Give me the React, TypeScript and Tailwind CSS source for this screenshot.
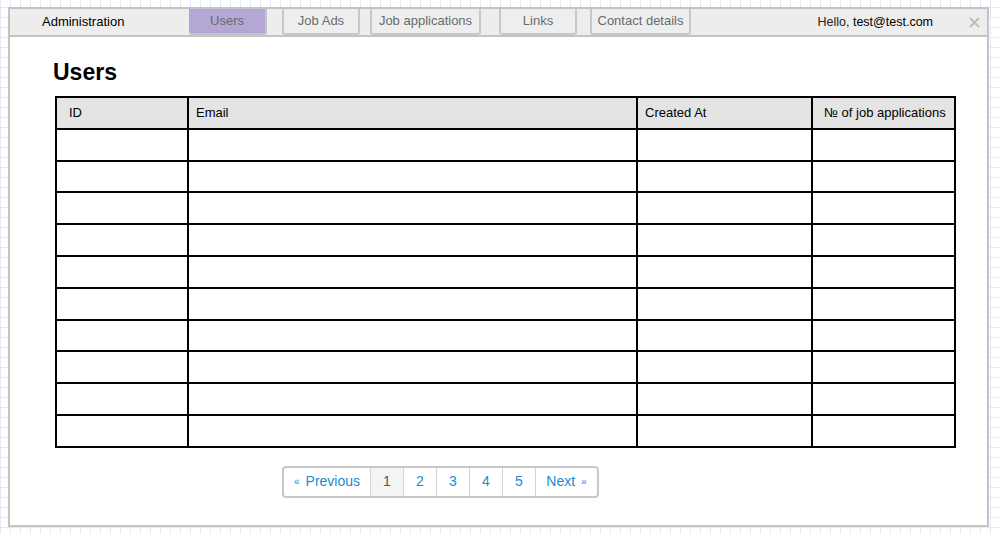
import React from "react"

const tabs = [
  { label: "Users", w: "w-[78px]", ml: "ml-0", active: true },
  { label: "Job Ads", w: "w-[78px]", ml: "ml-[15px]" },
  { label: "Job applications", w: "w-[111px]", ml: "ml-[10px]" },
  { label: "Links", w: "w-[78px]", ml: "ml-[18px]" },
  { label: "Contact details", w: "w-[101px]", ml: "ml-[13px]" },
]

const columns = [
  { label: "ID", w: "w-[132px]", pad: "pl-[12px]" },
  { label: "Email", w: "w-[449px]", pad: "pl-[7px]" },
  { label: "Created At", w: "w-[175px]", pad: "pl-[7px]" },
  { label: "№ of job applications", w: "w-[143px]", pad: "pl-[11px]" },
]

const rows = Array.from({ length: 10 }, (_, i) => i)

const pages = ["1", "2", "3", "4", "5"]

export default function App() {
  return (
    <div className="h-[534px] w-full overflow-hidden bg-white bg-[linear-gradient(#e7e7f7_1px,transparent_1px),linear-gradient(90deg,#e7e7f7_1px,transparent_1px)] bg-[size:10px_10px] bg-[position:0_7px] pt-[7px] pl-[8px] font-['Liberation_Sans',Arial,sans-serif]">
      <div className="w-[981px] h-[520px] border-2 border-[#c4c4c4] bg-white">
        {/* top bar */}
        <div className="h-[28px] flex items-start bg-[#ededed] border-b-2 border-[#c4c4c4]">
          <div className="w-[179px] h-[26px] flex items-center pl-[32px] text-[13px] text-black">
            Administration
          </div>
          {tabs.map((t) => (
            <div
              key={t.label}
              className={`${t.w} ${t.ml} h-[26px] flex items-center justify-center text-[13px] text-[#6a6a6a] rounded-b-[3px] border-2 border-t-0 ${
                t.active ? "bg-[#b4a7d6] border-[#c4c4c4] border-l-0" : "bg-[#eeeeee] border-[#c8c8c8]"
              }`}
            >
              {t.label}
            </div>
          ))}
          <div className="ml-auto h-[26px] flex items-center text-[12.5px] text-[#222]">
            Hello,&nbsp;<span className="text-black">test@test.com</span>
          </div>
          <div className="w-[54px] h-[26px] flex items-center justify-center pl-[28px]">
            <svg width="11" height="11" viewBox="0 0 11 11">
              <path d="M1 1L10 10M10 1L1 10" stroke="#bdbdbd" strokeWidth="2" />
            </svg>
          </div>
        </div>

        <h1 className="mt-[22px] ml-[43px] text-[23px] leading-[26px] font-bold text-black">Users</h1>

        <table className="mt-[11px] ml-[45px] w-[899px] table-fixed border-collapse border-2 border-black text-[13px]">
          <thead>
            <tr className="h-[31.8px] bg-[#e4e4e4]">
              {columns.map((c) => (
                <th key={c.label} className={`${c.w} ${c.pad} border-2 border-black text-left font-normal text-black`}>
                  {c.label}
                </th>
              ))}
            </tr>
          </thead>
          <tbody>
            {rows.map((r) => (
              <tr key={r} className="h-[31.8px]">
                {columns.map((c) => (
                  <td key={c.label} className="border-2 border-black" />
                ))}
              </tr>
            ))}
          </tbody>
        </table>

        <div className="mt-[18px] ml-[272px] flex w-fit h-[32px] border-2 border-[#c8c8c8] rounded-[4px] text-[14px] overflow-hidden">
          <div className="w-[87px] flex items-center justify-center text-[#1a8bd1] border-r border-[#d4d4d4]">
            <span className="text-[10px] mr-[6px]">«</span>Previous
          </div>
          {pages.map((p, i) => (
            <div
              key={p}
              className={`w-[33px] flex items-center justify-center border-r border-[#d4d4d4] ${
                i === 0 ? "bg-[#f4f4f4] text-[#555]" : "text-[#1a8bd1]"
              }`}
            >
              {p}
            </div>
          ))}
          <div className="w-[61px] flex items-center justify-center text-[#1a8bd1]">
            Next<span className="text-[10px] ml-[6px]">»</span>
          </div>
        </div>
      </div>
    </div>
  )
}
